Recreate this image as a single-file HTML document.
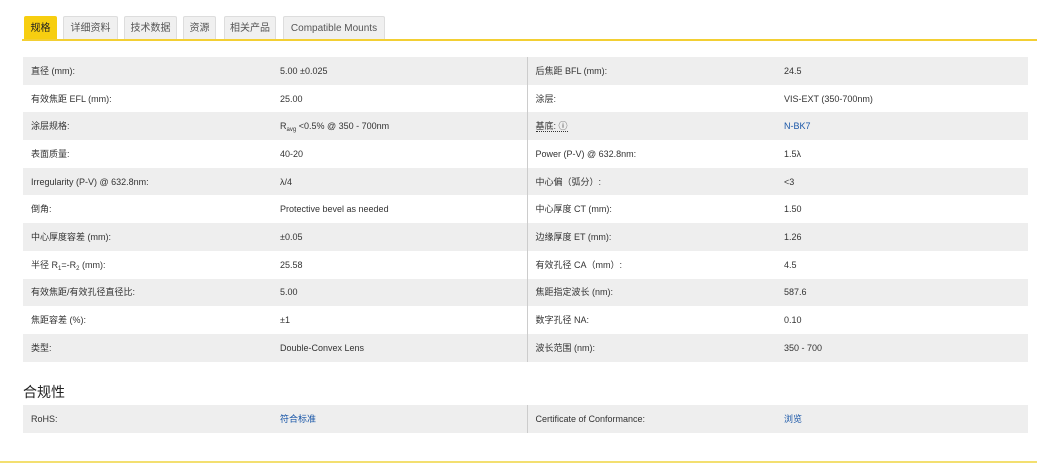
<!DOCTYPE html>
<html><head><meta charset="utf-8"><style>
*{margin:0;padding:0;box-sizing:border-box}
body{width:1037px;height:464px;background:#fff;font-family:"Liberation Sans","Noto Sans CJK SC",sans-serif;color:#333;position:relative;overflow:hidden}
.tabs{position:absolute;top:16px;left:0;height:24px}
.tab{position:absolute;top:0;height:24px;background:#f0f0f0;border:1px solid #ddd;border-bottom:none;font-size:10px;color:#555;line-height:24px;text-align:center;border-radius:2px 2px 0 0}
.tab.act{background:#f7ce10;border-color:#f7ce10;color:#222}
.yl{position:absolute;left:22px;right:0;top:39px;height:2px;background:#f3cf33}
.bl{position:absolute;left:0;right:0;top:461px;height:2px;background:#f3df70}
table{position:absolute;left:23px;width:1005px;border-collapse:collapse;font-size:9px;color:#333}
td{height:27.7px;padding:0 8px;vertical-align:middle;line-height:12px}
tr:nth-child(odd) td{background:#eeeeee}
td.c1{width:249px}td.c2{width:255px;border-right:1px solid #ccc}td.c3{width:249px}
a{color:#1a57a8;text-decoration:none}
h3{position:absolute;left:23px;top:382px;font-size:14px;font-weight:normal;color:#222}
sub{font-size:6px;line-height:0;vertical-align:-2px}
</style></head><body>
<div class="tabs">
<div class="tab act" style="left:24px;width:33px">规格</div>
<div class="tab" style="left:63px;width:55px">详细资料</div>
<div class="tab" style="left:124px;width:53px">技术数据</div>
<div class="tab" style="left:183px;width:33px">资源</div>
<div class="tab" style="left:224px;width:52px">相关产品</div>
<div class="tab" style="left:283px;width:102px">Compatible Mounts</div>
</div>
<div class="yl"></div>
<table style="top:57px">
<tr><td class="c1">直径 (mm):</td><td class="c2">5.00 ±0.025</td><td class="c3">后焦距 BFL (mm):</td><td>24.5</td></tr>
<tr><td class="c1">有效焦距 EFL (mm):</td><td class="c2">25.00</td><td class="c3">涂层:</td><td>VIS-EXT (350-700nm)</td></tr>
<tr><td class="c1">涂层规格:</td><td class="c2">R<sub>avg</sub> &lt;0.5% @ 350 - 700nm</td><td class="c3"><span style="border-bottom:1px dotted #333">基底: ⓘ</span></td><td><a>N-BK7</a></td></tr>
<tr><td class="c1">表面质量:</td><td class="c2">40-20</td><td class="c3">Power (P-V) @ 632.8nm:</td><td>1.5λ</td></tr>
<tr><td class="c1">Irregularity (P-V) @ 632.8nm:</td><td class="c2">λ/4</td><td class="c3">中心偏（弧分）:</td><td>&lt;3</td></tr>
<tr><td class="c1">倒角:</td><td class="c2">Protective bevel as needed</td><td class="c3">中心厚度 CT (mm):</td><td>1.50</td></tr>
<tr><td class="c1">中心厚度容差 (mm):</td><td class="c2">±0.05</td><td class="c3">边缘厚度 ET (mm):</td><td>1.26</td></tr>
<tr><td class="c1">半径 R<sub>1</sub>=-R<sub>2</sub> (mm):</td><td class="c2">25.58</td><td class="c3">有效孔径 CA（mm）:</td><td>4.5</td></tr>
<tr><td class="c1">有效焦距/有效孔径直径比:</td><td class="c2">5.00</td><td class="c3">焦距指定波长 (nm):</td><td>587.6</td></tr>
<tr><td class="c1">焦距容差 (%):</td><td class="c2">±1</td><td class="c3">数字孔径 NA:</td><td>0.10</td></tr>
<tr><td class="c1">类型:</td><td class="c2">Double-Convex Lens</td><td class="c3">波长范围 (nm):</td><td>350 - 700</td></tr>
</table>
<h3>合规性</h3>
<table style="top:405px">
<tr><td class="c1">RoHS:</td><td class="c2"><a>符合标准</a></td><td class="c3">Certificate of Conformance:</td><td><a>浏览</a></td></tr>
</table>
<div class="bl"></div>
</body></html>
